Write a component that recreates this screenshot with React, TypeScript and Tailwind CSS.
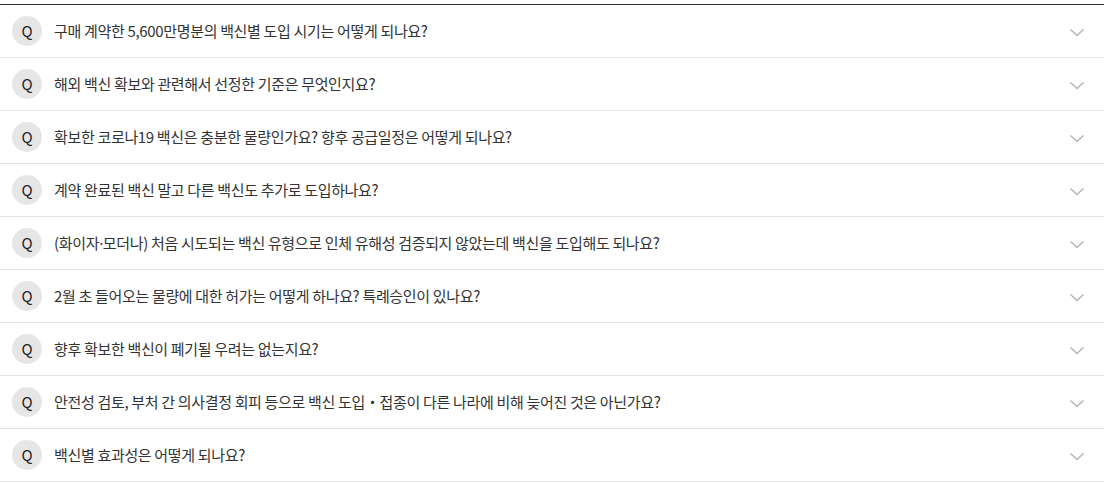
import React from "react";

const items: React.ReactNode[] = [
  "구매 계약한 5,600만명분의 백신별 도입 시기는 어떻게 되나요?",
  "해외 백신 확보와 관련해서 선정한 기준은 무엇인지요?",
  "확보한 코로나19 백신은 충분한 물량인가요? 향후 공급일정은 어떻게 되나요?",
  "계약 완료된 백신 말고 다른 백신도 추가로 도입하나요?",
  <>
    (화이자<span style={{ fontFamily: '"Noto Sans", sans-serif' }}>·</span>모더나) 처음 시도되는 백신 유형으로 인체 유해성 검증되지 않았는데 백신을 도입해도 되나요?
  </>,
  "2월 초 들어오는 물량에 대한 허가는 어떻게 하나요? 특례승인이 있나요?",
  "향후 확보한 백신이 폐기될 우려는 없는지요?",
  "안전성 검토, 부처 간 의사결정 회피 등으로 백신 도입・접종이 다른 나라에 비해 늦어진 것은 아닌가요?",
  "백신별 효과성은 어떻게 되나요?",
];

export default function App() {
  return (
    <div
      className="w-[1104px] pt-1 bg-white"
      style={{ fontFamily: '"Noto Sans CJK KR", "Noto Sans", sans-serif' }}
    >
      <div className="border-t border-[#333333]">
        {items.map((t, i) => (
          <div
            key={i}
            className="flex items-center h-[53px] border-b border-[#e2e2e2]"
          >
            <div className="ml-3 w-[30px] h-[30px] rounded-full bg-[#e6e6e6] flex items-center justify-center text-[15px] text-[#222] shrink-0">
              Q
            </div>
            <div className="ml-[12px] flex-1 text-[15px] text-[#333] tracking-[-0.33px]">
              {t}
            </div>
            <svg
              width="16"
              height="10"
              viewBox="0 0 16 10"
              className="mr-[19px] mt-[3px] shrink-0"
            >
              <path
                d="M1.5 1.5 L8 7.5 L14.5 1.5"
                fill="none"
                stroke="#b5b5b5"
                strokeWidth="1.5"
              />
            </svg>
          </div>
        ))}
      </div>
    </div>
  );
}
